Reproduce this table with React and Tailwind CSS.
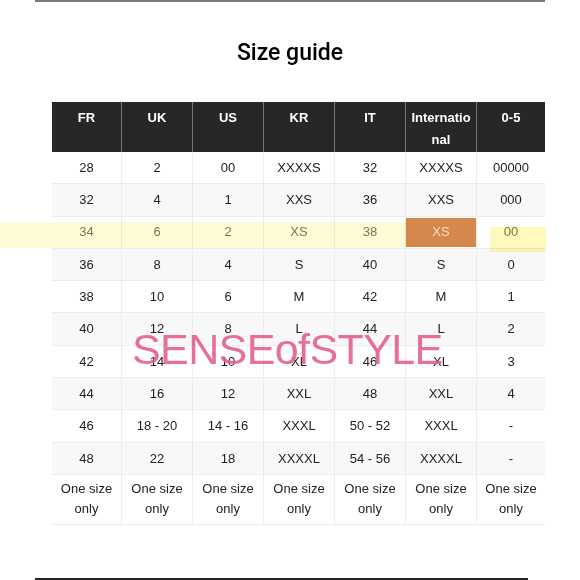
const headers = ['FR', 'UK', 'US', 'KR', 'IT', 'International', '0-5'];

const rows = [
  ['28', '2', '00', 'XXXXS', '32', 'XXXXS', '00000'],
  ['32', '4', '1', 'XXS', '36', 'XXS', '000'],
  ['34', '6', '2', 'XS', '38', 'XS', '00'],
  ['36', '8', '4', 'S', '40', 'S', '0'],
  ['38', '10', '6', 'M', '42', 'M', '1'],
  ['40', '12', '8', 'L', '44', 'L', '2'],
  ['42', '14', '10', 'XL', '46', 'XL', '3'],
  ['44', '16', '12', 'XXL', '48', 'XXL', '4'],
  ['46', '18 - 20', '14 - 16', 'XXXL', '50 - 52', 'XXXL', '-'],
  ['48', '22', '18', 'XXXXL', '54 - 56', 'XXXXL', '-'],
];

function App() {
  return (
    <div className="relative w-[580px] h-[580px] bg-white overflow-hidden font-['Liberation_Sans',Arial,sans-serif]">
      {/* top rule */}
      <div className="ml-[35px] w-[510px] h-[2px] bg-[#7a7a7a]" />

      {/* title */}
      <h1 className="mt-[38px] text-center text-[23px] font-medium text-black font-['Roboto',sans-serif] leading-[26px]">
        Size guide
      </h1>

      {/* table */}
      <div className="mt-[36px] ml-[52px] w-[493px] text-[13px] text-[#222]">
        <div className="grid grid-cols-[70px_71px_71px_71px_71px_71px_68px] bg-[#272727] h-[50px]">
          {headers.map((h, i) => (
            <div
              key={h}
              className={`px-1 pt-[5px] text-center font-bold text-white leading-[22px] ${i < 6 ? 'border-r border-[#777]' : ''}`}
            >
              {h === 'International' ? <>Internatio<br />nal</> : h}
            </div>
          ))}
        </div>
        {rows.map((r, ri) => (
          <div
            key={ri}
            className={`grid grid-cols-[70px_71px_71px_71px_71px_71px_68px] h-[32.3px] border-b border-[#ececec] ${ri % 2 === 1 ? 'bg-[#f8f8f8]' : 'bg-white'}`}
          >
            {r.map((c, ci) => {
              const hl = ri === 2;
              const orange = hl && ci === 5;
              return (
                <div
                  key={ci}
                  className={`flex items-center justify-center ${ci < 6 ? 'border-r border-[#ececec]' : ''} ${orange ? 'bg-[#d5884c] text-[#f3dcc4] my-[1px]' : hl ? 'text-[#7b7a5e]' : ''}`}
                >
                  {c}
                </div>
              );
            })}
          </div>
        ))}
        <div className="grid grid-cols-[70px_71px_71px_71px_71px_71px_68px] h-[50px] bg-white border-b border-[#ececec]">
          {headers.map((h, i) => (
            <div
              key={h}
              className={`flex items-center justify-center text-center leading-[20px] ${i < 6 ? 'border-r border-[#ececec]' : ''}`}
            >
              One size<br />only
            </div>
          ))}
        </div>
      </div>

      {/* highlighter marks */}
      <div className="absolute left-0 top-[222px] w-[407px] h-[26px] bg-[#fff48a] opacity-35 mix-blend-multiply" />
      <div className="absolute left-[490px] top-[227px] w-[56px] h-[25px] bg-[#fff27a] opacity-50 mix-blend-multiply" />

      {/* watermark */}
      <div className="absolute left-[132px] top-[325px] text-[43px] leading-[48px] tracking-[-0.6px] text-[#e3628d] opacity-90 font-['Liberation_Sans',Arial,sans-serif]">
        SENSEofSTYLE
      </div>

      {/* bottom rule */}
      <div className="absolute left-[35px] bottom-0 w-[493px] h-[2px] bg-[#222]" />
    </div>
  );
}

export default App;
